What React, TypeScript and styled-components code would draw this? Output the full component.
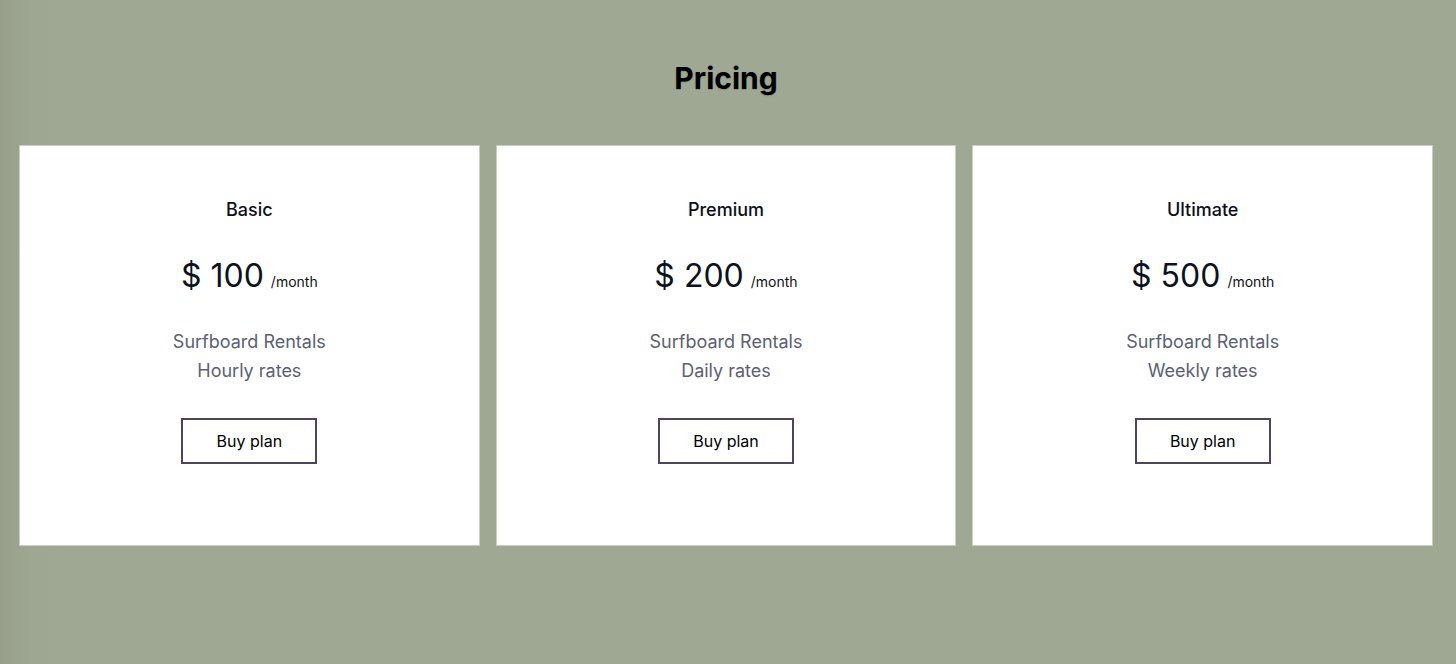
import React from "react";
import styled, { createGlobalStyle } from "styled-components";

const Global = createGlobalStyle`
  html, body { margin: 0; padding: 0; }
  body {
    background: #9fa893;
    font-family: Inter, "Noto Sans", Arial, sans-serif;
    min-height: 664px;
  }
`;

const Page = styled.main`
  min-height: 664px;
  box-sizing: border-box;
  padding: 56px 23px 0 19px;
  background: linear-gradient(90deg, #979f8a 0px, #9ea792 30px, #9fa893 60px);
`;

const Heading = styled.h1`
  margin: 0;
  text-align: center;
  font-size: 30px;
  line-height: 44px;
  font-weight: 700;
  color: #000;
  text-shadow: 0 1px 1px rgba(0, 0, 0, 0.15);
`;

const Grid = styled.section`
  display: grid;
  grid-template-columns: repeat(3, 1fr);
  gap: 16px;
  margin-top: 45px;
`;

const Card = styled.article`
  background: #fff;
  border: 1px solid #c9cdc3;
  height: 401px;
  box-sizing: border-box;
  display: flex;
  flex-direction: column;
  align-items: center;
  padding-top: 52px;
`;

const PlanName = styled.h2`
  margin: 0;
  font-size: 18px;
  line-height: 24px;
  font-weight: 500;
  color: #0b0f19;
`;

const Price = styled.div`
  margin-top: 34px;
  display: flex;
  align-items: baseline;
  gap: 7px;
  color: #0b1220;
`;

const Amount = styled.span`
  font-size: 32px;
  line-height: 40px;
  font-weight: 400;
`;

const Period = styled.span`
  font-size: 14px;
  color: #111;
`;

const Features = styled.ul`
  list-style: none;
  margin: 31px 0 0;
  padding: 0;
  text-align: center;
  color: #5b6172;
  font-size: 18px;
  line-height: 29px;
`;

const Button = styled.button`
  margin-top: 33px;
  width: 136px;
  height: 46px;
  background: #fff;
  border: 2px solid #4d4560;
  font-family: inherit;
  font-size: 16px;
  color: #000;
  cursor: pointer;
`;

const plans = [
  { name: "Basic", price: 100, rate: "Hourly rates" },
  { name: "Premium", price: 200, rate: "Daily rates" },
  { name: "Ultimate", price: 500, rate: "Weekly rates" },
];

export default function App() {
  return (
    <>
      <Global />
      <Page>
        <Heading>Pricing</Heading>
        <Grid>
          {plans.map((p) => (
            <Card key={p.name}>
              <PlanName>{p.name}</PlanName>
              <Price>
                <Amount>$ {p.price}</Amount>
                <Period>/month</Period>
              </Price>
              <Features>
                <li>Surfboard Rentals</li>
                <li>{p.rate}</li>
              </Features>
              <Button>Buy plan</Button>
            </Card>
          ))}
        </Grid>
      </Page>
    </>
  );
}
